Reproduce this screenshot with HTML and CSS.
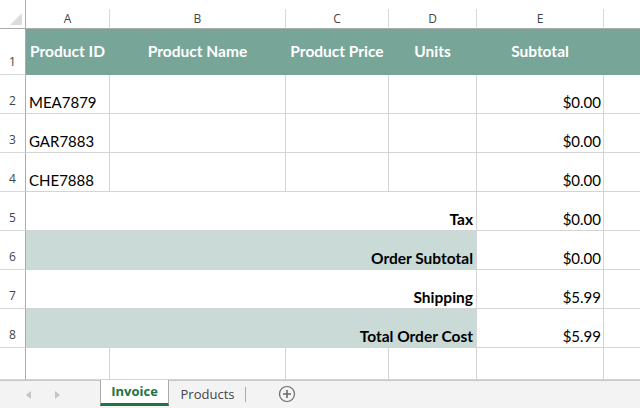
FILE: index.html
```html
<!DOCTYPE html>
<html lang="en">

<head>
  <meta charset="UTF-8">
  <title>Invoice</title>
  <link rel="stylesheet" href="styles.css">
</head>

<body>

  <div class="workbook">
    <div class="sheet">
      <!-- column letters -->
      <div class="corner"><span class="corner-mark"></span></div>
      <div class="col-head">A</div>
      <div class="col-head">B</div>
      <div class="col-head">C</div>
      <div class="col-head">D</div>
      <div class="col-head">E</div>
      <div class="col-head last"></div>

      <!-- row 1: table header -->
      <div class="row-head">1</div>
      <div class="cell title">Product ID</div>
      <div class="cell title">Product Name</div>
      <div class="cell title">Product Price</div>
      <div class="cell title">Units</div>
      <div class="cell title">Subtotal</div>
      <div class="cell title"></div>

      <div class="row-head">2</div>
      <div class="cell">MEA7879</div>
      <div class="cell"></div>
      <div class="cell"></div>
      <div class="cell"></div>
      <div class="cell money">$0.00</div>
      <div class="cell last"></div>

      <div class="row-head">3</div>
      <div class="cell">GAR7883</div>
      <div class="cell"></div>
      <div class="cell"></div>
      <div class="cell"></div>
      <div class="cell money">$0.00</div>
      <div class="cell last"></div>

      <div class="row-head">4</div>
      <div class="cell">CHE7888</div>
      <div class="cell"></div>
      <div class="cell"></div>
      <div class="cell"></div>
      <div class="cell money">$0.00</div>
      <div class="cell last"></div>

      <!-- totals, labels merged across A:D -->
      <div class="row-head">5</div>
      <div class="cell label">Tax</div>
      <div class="cell money">$0.00</div>
      <div class="cell last"></div>

      <div class="row-head">6</div>
      <div class="cell label shade">Order Subtotal</div>
      <div class="cell money">$0.00</div>
      <div class="cell last"></div>

      <div class="row-head">7</div>
      <div class="cell label">Shipping</div>
      <div class="cell money">$5.99</div>
      <div class="cell last"></div>

      <div class="row-head">8</div>
      <div class="cell label shade">Total Order Cost</div>
      <div class="cell money">$5.99</div>
      <div class="cell last"></div>

      <div class="row-head"></div>
      <div class="cell"></div>
      <div class="cell"></div>
      <div class="cell"></div>
      <div class="cell"></div>
      <div class="cell"></div>
      <div class="cell last"></div>
    </div>

    <div class="tabs">
      <div class="nav">
        <span class="arrow left"></span>
        <span class="arrow right"></span>
      </div>
      <div class="tab active">Invoice</div>
      <div class="tab">Products</div>
      <div class="add-sheet">
        <svg width="18" height="18" viewBox="0 0 18 18">
          <circle cx="9" cy="9" r="7.5" fill="none" stroke="#6a6a6a" stroke-width="1.2" />
          <path d="M9 5v8M5 9h8" stroke="#6a6a6a" stroke-width="1.6" />
        </svg>
      </div>
    </div>
  </div>

</body>

</html>
```

FILE: styles.css
```css
* {
  box-sizing: border-box;
  margin: 0;
  padding: 0;
}

body {
  font-family: 'Lato', 'Liberation Sans', sans-serif;
  background: white;
  width: 640px;
  height: 408px;
  overflow: hidden;
}

.workbook {
  display: flex;
  flex-direction: column;
  height: 408px;
}

.sheet {
  display: grid;
  grid-template-columns: 26px 84px 176px 103px 88px 127px 1fr;
  grid-template-rows: 29px 46px repeat(7, 39px) 32px;
  height: 380px;
  font-size: 15px;
  color: #000;
}

/* headers */
.corner {
  border-right: 1px solid #ababab;
  border-bottom: 1px solid #ababab;
  display: flex;
  justify-content: flex-end;
  align-items: flex-end;
  padding: 0 3px 3px 0;
}

.corner-mark {
  width: 0;
  height: 0;
  border-left: 12px solid transparent;
  border-bottom: 12px solid #dcdcdc;
}

.col-head {
  margin-top: 9px;
  border-right: 1px solid #d8d8d8;
  border-bottom: 1px solid #ababab;
  display: flex;
  justify-content: center;
  align-items: center;
  font-family: 'Open Sans', sans-serif;
  font-size: 12px;
  color: #444;
}

.col-head.last {
  border-right: none;
}

.row-head {
  border-right: 1px solid #ababab;
  border-bottom: 1px solid #d8d8d8;
  display: flex;
  justify-content: center;
  align-items: flex-end;
  padding-bottom: 4px;
  font-family: 'Open Sans', sans-serif;
  font-size: 12px;
  color: #444;
}

/* cells */
.cell {
  border-right: 1px solid #d4d4d4;
  border-bottom: 1px solid #d4d4d4;
  display: flex;
  align-items: flex-end;
  padding: 0 3px 1px;
  line-height: 20px;
  white-space: nowrap;
}

.cell.last {
  border-right: none;
}

.cell.title {
  background: #77a598;
  border-color: #77a598;
  color: white;
  font-size: 15.5px;
  font-weight: bold;
  justify-content: center;
  align-items: center;
  padding: 0 0 2px;
}

.cell.money {
  justify-content: flex-end;
  padding-right: 2px;
}

.cell.label {
  grid-column: 2 / 6;
  justify-content: flex-end;
  font-size: 15.5px;
  font-weight: bold;
}

.cell.shade {
  background: #cadbd7;
}

/* sheet tabs */
.tabs {
  height: 28px;
  background: #f3f3f3;
  border-top: 1px solid #c6c6c6;
  display: flex;
  align-items: stretch;
  font-family: 'Open Sans', sans-serif;
  font-size: 13px;
}

.nav {
  width: 100px;
  display: flex;
  align-items: center;
  padding-left: 26px;
  gap: 24px;
}

.arrow {
  width: 0;
  height: 0;
  border-top: 4px solid transparent;
  border-bottom: 4px solid transparent;
}

.arrow.left {
  border-right: 5px solid #c4c4c4;
}

.arrow.right {
  border-left: 5px solid #c4c4c4;
}

.tab {
  padding: 0 12px 1px;
  display: flex;
  align-items: center;
  color: #444;
}

.tab.active {
  width: 69px;
  justify-content: center;
  margin-top: -1px;
  margin-bottom: 2px;
  background: white;
  border-left: 1px solid #ababab;
  border-right: 1px solid #ababab;
  border-bottom: 3px solid #217346;
  color: #217346;
  font-weight: bold;
}

.tab + .tab {
  width: 77px;
  justify-content: center;
  position: relative;
}

.tab + .tab::after {
  content: '';
  position: absolute;
  right: 0;
  top: 6px;
  bottom: 6px;
  border-right: 1px solid #ababab;
}

.add-sheet {
  width: 82px;
  display: flex;
  align-items: center;
  justify-content: center;
  padding-bottom: 1px;
}
```
